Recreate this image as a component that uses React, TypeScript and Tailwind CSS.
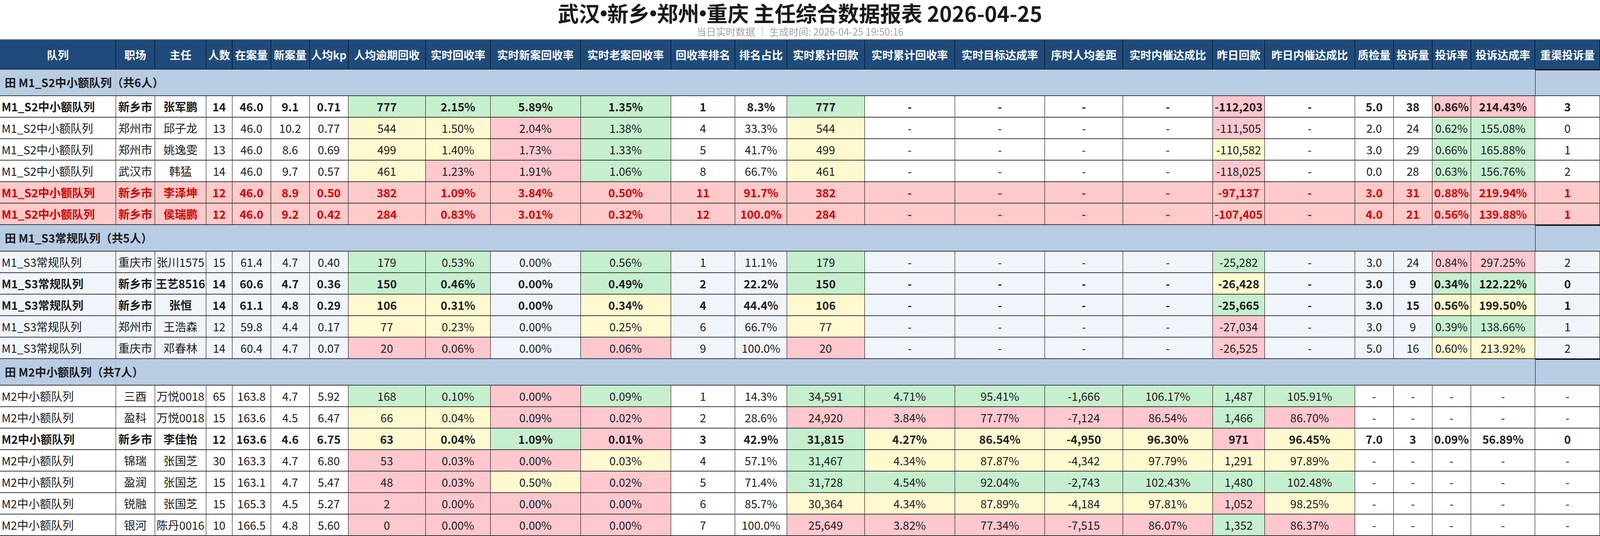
import React from "react";

const COLS =
  "grid grid-cols-[348fr_117fr_154fr_78fr_116fr_116fr_116fr_232fr_195fr_270fr_271fr_193fr_155fr_233fr_271fr_270fr_234fr_270fr_155fr_271fr_116fr_116fr_116fr_193fr_194fr]";

const HEADERS = [
  "队列", "职场", "主任", "人数", "在案量", "新案量", "人均kp", "人均逾期回收", "实时回收率",
  "实时新案回收率", "实时老案回收率", "回收率排名", "排名占比", "实时累计回款", "实时累计回收率",
  "实时目标达成率", "序时人均差距", "实时内催达成比", "昨日回款", "昨日内催达成比", "质检量",
  "投诉量", "投诉率", "投诉达成率", "重渠投诉量",
];

const BG: Record<string, string> = {
  g: "bg-[#c6efce]",
  y: "bg-[#fff9d0]",
  p: "bg-[#ffc7ce]",
};

type Row = { c: string[]; bold?: boolean; red?: boolean };
type Group = { title: string; rowBg: string; rows: Row[] };

const D = ["-", "-", "-", "-"];

const GROUPS: Group[] = [
  {
    title: "田 M1_S2中小额队列（共6人）",
    rowBg: "bg-white",
    rows: [
      { bold: true, c: ["M1_S2中小额队列", "新乡市", "张军鹏", "14", "46.0", "9.1", "0.71", "777|g", "2.15%|g", "5.89%|g", "1.35%|g", "1", "8.3%", "777|g", ...D, "-112,203|p", "-", "5.0", "38", "0.86%|p", "214.43%|p", "3"] },
      { c: ["M1_S2中小额队列", "郑州市", "邱子龙", "13", "46.0", "10.2", "0.77", "544|y", "1.50%|y", "2.04%|p", "1.38%|g", "4", "33.3%", "544|y", ...D, "-111,505|p", "-", "2.0", "24", "0.62%|g", "155.08%|g", "0"] },
      { c: ["M1_S2中小额队列", "郑州市", "姚逸雯", "13", "46.0", "8.6", "0.69", "499|y", "1.40%|y", "1.73%|p", "1.33%|g", "5", "41.7%", "499|y", ...D, "-110,582|y", "-", "3.0", "29", "0.66%|g", "165.88%|g", "1"] },
      { c: ["M1_S2中小额队列", "武汉市", "韩猛", "14", "46.0", "9.7", "0.57", "461|y", "1.23%|p", "1.91%|p", "1.06%|g", "8", "66.7%", "461|y", ...D, "-118,025|p", "-", "0.0", "28", "0.63%|g", "156.76%|g", "2"] },
      { red: true, c: ["M1_S2中小额队列", "新乡市", "李泽坤", "12", "46.0", "8.9", "0.50", "382", "1.09%", "3.84%", "0.50%", "11", "91.7%", "382", ...D, "-97,137", "-", "3.0", "31", "0.88%", "219.94%", "1"] },
      { red: true, c: ["M1_S2中小额队列", "新乡市", "侯瑞鹏", "12", "46.0", "9.2", "0.42", "284", "0.83%", "3.01%", "0.32%", "12", "100.0%", "284", ...D, "-107,405", "-", "4.0", "21", "0.56%", "139.88%", "1"] },
    ],
  },
  {
    title: "田 M1_S3常规队列（共5人）",
    rowBg: "bg-[#f0f4fb]",
    rows: [
      { c: ["M1_S3常规队列", "重庆市", "张川1575", "15", "61.4", "4.7", "0.40", "179|g", "0.53%|g", "0.00%", "0.56%|g", "1", "11.1%", "179|g", ...D, "-25,282|g", "-", "3.0", "24", "0.84%|p", "297.25%|p", "2"] },
      { bold: true, c: ["M1_S3常规队列", "新乡市", "王艺8516", "14", "60.6", "4.7", "0.36", "150|g", "0.46%|g", "0.00%", "0.49%|g", "2", "22.2%", "150|g", ...D, "-26,428|y", "-", "3.0", "9", "0.34%|g", "122.22%|g", "0"] },
      { bold: true, c: ["M1_S3常规队列", "新乡市", "张恒", "14", "61.1", "4.8", "0.29", "106|y", "0.31%|y", "0.00%", "0.34%|y", "4", "44.4%", "106|y", ...D, "-25,665|g", "-", "3.0", "15", "0.56%|y", "199.50%|y", "1"] },
      { c: ["M1_S3常规队列", "郑州市", "王浩森", "12", "59.8", "4.4", "0.17", "77|y", "0.23%|y", "0.00%", "0.25%|y", "6", "66.7%", "77|y", ...D, "-27,034|p", "-", "3.0", "9", "0.39%|g", "138.66%|g", "1"] },
      { c: ["M1_S3常规队列", "重庆市", "邓春林", "14", "60.4", "4.7", "0.07", "20|p", "0.06%|p", "0.00%", "0.06%|p", "9", "100.0%", "20|p", ...D, "-26,525|p", "-", "5.0", "16", "0.60%|y", "213.92%|y", "2"] },
    ],
  },
  {
    title: "田 M2中小额队列（共7人）",
    rowBg: "bg-white",
    rows: [
      { c: ["M2中小额队列", "三酉", "万悦0018", "65", "163.8", "4.7", "5.92", "168|g", "0.10%|g", "0.00%|p", "0.09%|g", "1", "14.3%", "34,591|g", "4.71%|g", "95.41%|g", "-1,666|g", "106.17%|g", "1,487|g", "105.91%|g", "-", "-", "-", "-", "-"] },
      { c: ["M2中小额队列", "盈科", "万悦0018", "15", "163.6", "4.5", "6.47", "66|y", "0.04%|y", "0.09%|p", "0.02%|p", "2", "28.6%", "24,920|p", "3.84%|p", "77.77%|p", "-7,124|p", "86.54%|p", "1,466|g", "86.70%|p", "-", "-", "-", "-", "-"] },
      { bold: true, c: ["M2中小额队列", "新乡市", "李佳怡", "12", "163.6", "4.6", "6.75", "63|y", "0.04%|y", "1.09%|g", "0.01%|p", "3", "42.9%", "31,815|g", "4.27%|y", "86.54%|y", "-4,950|y", "96.30%|y", "971|p", "96.45%|y", "7.0", "3", "0.09%", "56.89%", "0"] },
      { c: ["M2中小额队列", "锦瑞", "张国芝", "30", "163.3", "4.7", "6.80", "53|p", "0.03%|p", "0.00%|p", "0.03%|y", "4", "57.1%", "31,467|g", "4.34%|y", "87.87%|y", "-4,342|y", "97.79%|y", "1,291|y", "97.89%|y", "-", "-", "-", "-", "-"] },
      { c: ["M2中小额队列", "盈润", "张国芝", "15", "163.1", "4.7", "5.47", "48|p", "0.03%|p", "0.50%|y", "0.02%|p", "5", "71.4%", "31,728|g", "4.54%|g", "92.04%|g", "-2,743|g", "102.43%|g", "1,480|g", "102.48%|g", "-", "-", "-", "-", "-"] },
      { c: ["M2中小额队列", "锐融", "张国芝", "15", "165.3", "4.5", "5.27", "2|p", "0.00%|p", "0.00%|p", "0.00%|p", "6", "85.7%", "30,364|y", "4.34%|y", "87.89%|y", "-4,184|y", "97.81%|y", "1,052|p", "98.25%|y", "-", "-", "-", "-", "-"] },
      { c: ["M2中小额队列", "银河", "陈丹0016", "10", "166.5", "4.8", "5.60", "0|p", "0.00%|p", "0.00%|p", "0.00%|p", "7", "100.0%", "25,649|p", "3.82%|p", "77.34%|p", "-7,515|p", "86.07%|p", "1,352|g", "86.37%|p", "-", "-", "-", "-", "-"] },
    ],
  },
];

function DataRow({ row, rowBg }: { row: Row; rowBg: string }) {
  return (
    <div className={`${COLS} h-[55px] ${row.red ? "bg-[#ffcaca]" : rowBg}`}>
      {row.c.map((raw, i) => {
        const [t, k] = raw.split("|");
        const bg = !row.red && k ? BG[k] : "";
        const color = row.red ? "text-[#d40000]" : "text-[#1c1c1c]";
        const weight = row.bold || row.red ? "font-bold" : "font-normal";
        const align = i === 0 ? "justify-start pl-1" : "justify-center";
        return (
          <div
            key={i}
            className={`min-w-0 flex items-center ${align} ${bg} ${color} ${weight} border-r border-b-2 border-r-black border-b-[#3a3a3a] text-[29px] leading-none whitespace-nowrap overflow-hidden`}
          >
            {t}
          </div>
        );
      })}
    </div>
  );
}

function GroupRow({ title }: { title: string }) {
  return (
    <div className={`${COLS} h-[68px] bg-[#b8cce4] border-b-2 border-[#3a3a3a]`}>
      <div className="relative z-10 min-w-0 flex items-center pl-3 border-r border-[#9fb4cf] text-[29px] font-bold text-[#1c1c1c] whitespace-nowrap overflow-visible">
        {title}
      </div>
      <div className="col-span-23 min-w-0" />
      <div className="min-w-0 border-l border-t-2 border-black" />
    </div>
  );
}

function Dot() {
  return <span className="font-['Liberation_Sans',sans-serif] leading-none">•</span>;
}

export default function App() {
  return (
    <div className="w-full h-[1372px] overflow-hidden bg-white font-['Noto_Sans_CJK_SC','Noto_Sans',sans-serif]">
      <div className="h-[100px] flex flex-col items-center">
        <div className="h-[66px] flex items-center text-[54px] leading-none font-bold text-[#1a1a1a] whitespace-nowrap">
          武汉<Dot />新乡<Dot />郑州<Dot />重庆 主任综合数据报表 2026-04-25
        </div>
        <div className="text-[25px] leading-[28px] text-[#a3a3a3] whitespace-nowrap">
          当日实时数据 ｜ 生成时间: 2026-04-25 19:50:16
        </div>
      </div>
      <div className={`${COLS} h-[78px] bg-[#1f4b7a] border-t-2 border-[#8a8a8a]`}>
        {HEADERS.map((h, i) => (
          <div
            key={i}
            className="min-w-0 flex items-center justify-center border-r border-b border-black text-white font-bold text-[28px] leading-none whitespace-nowrap overflow-hidden"
          >
            {h}
          </div>
        ))}
      </div>
      {GROUPS.map((g, gi) => (
        <div key={gi}>
          <GroupRow title={g.title} />
          {g.rows.map((r, ri) => (
            <DataRow key={ri} row={r} rowBg={g.rowBg} />
          ))}
        </div>
      ))}
    </div>
  );
}
